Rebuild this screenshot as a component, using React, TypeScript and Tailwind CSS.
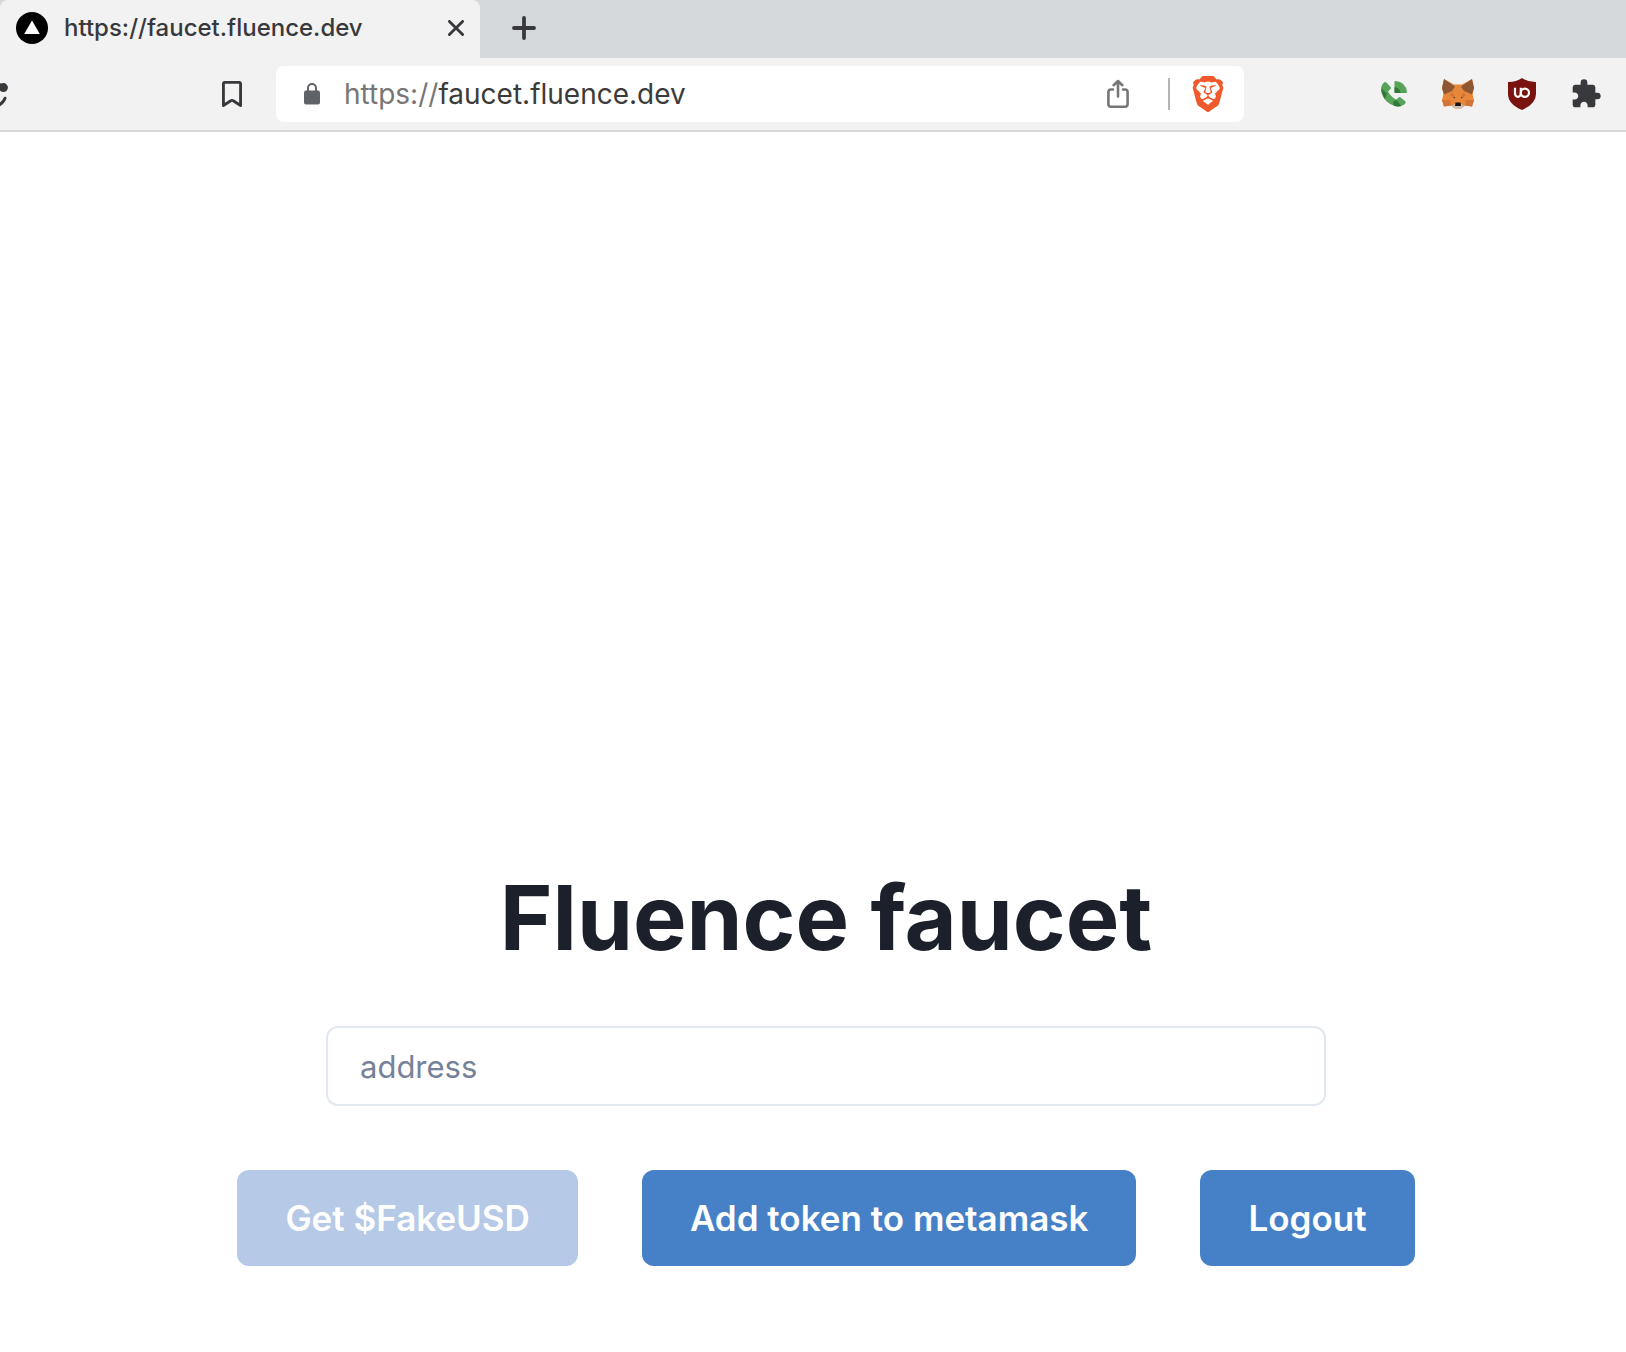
import { MdExtension } from "react-icons/md";
import { SiBrave } from "react-icons/si";

const iconButton = "flex items-center justify-center";

function Favicon() {
  return (
    <svg viewBox="0 0 32 32" className="size-8 shrink-0" aria-hidden="true">
      <circle cx="16" cy="16" r="16" fill="#000" />
      <path d="M16 8.5 23.8 22H8.2Z" fill="#fff" />
    </svg>
  );
}

function CloseIcon() {
  return (
    <svg viewBox="0 0 16 16" className="size-4" fill="none" stroke="#38393d" strokeWidth="2.8" strokeLinecap="round" aria-hidden="true">
      <path d="M1.4 1.4 14.6 14.6M14.6 1.4 1.4 14.6" />
    </svg>
  );
}

function PlusIcon() {
  return (
    <svg viewBox="0 0 24 24" className="size-6" fill="none" stroke="#38393d" strokeWidth="3.8" strokeLinecap="round" aria-hidden="true">
      <path d="M12 2V22M2 12H22" />
    </svg>
  );
}

function ReloadIcon() {
  return (
    <svg viewBox="0 0 8 28" className="h-7 w-2" aria-hidden="true">
      <circle cx="3.4" cy="7.6" r="4.5" fill="#38393d" />
      <path d="M-2 3.6 2 6" fill="none" stroke="#38393d" strokeWidth="3" />
      <path d="M5 18.2Q3.4 22.5-1 25" fill="none" stroke="#38393d" strokeWidth="3" strokeLinecap="round" />
    </svg>
  );
}

function BookmarkIcon() {
  return (
    <svg viewBox="0 0 20 26" className="h-[26px] w-5" fill="none" stroke="#38393d" strokeWidth="2.9" strokeLinejoin="round" aria-hidden="true">
      <path d="M3 1.4H17Q18.6 1.4 18.6 3V24.5L11.2 19.8Q10 19 8.8 19.8L1.4 24.5V3Q1.4 1.4 3 1.4Z" />
    </svg>
  );
}

function LockIcon() {
  return (
    <svg viewBox="0 0 16 22" className="h-[22px] w-4 shrink-0" aria-hidden="true">
      <rect y="7.5" width="16" height="14" rx="2" fill="#5f6368" />
      <path d="M4 9V5a4 4 0 0 1 8 0V9" fill="none" stroke="#5f6368" strokeWidth="2" />
    </svg>
  );
}

function ShareIcon() {
  return (
    <svg viewBox="0 0 22 30" className="h-[30px] w-[22px]" fill="none" stroke="#767676" strokeWidth="2.6" strokeLinejoin="round" strokeLinecap="round" aria-hidden="true">
      <path d="M6 10.5H4Q1.4 10.5 1.4 13V25Q1.4 27.8 4 27.8H18Q20.6 27.8 20.6 25V13Q20.6 10.5 18 10.5H16" />
      <path d="M11 17.5V2.5M6.6 6.2 11 2 15.4 6.2" />
    </svg>
  );
}

function PhoneIcon() {
  return (
    <svg viewBox="0 0 26 26" className="size-[26px]" aria-hidden="true">
      <path d="M3.4 1.2Q4.6.6 5.6 1.7L9.6 6.1Q10.4 7.1 9.5 8L7 10.6Q9.5 15.5 15.2 18.8L17.6 16.5Q18.6 15.7 19.6 16.5L24 20Q25.2 21.2 24.2 22.6Q21 26.2 14.6 25.2Q3.5 22.5.4 11.5Q-1 4.5 3.4 1.2Z" fill="#56a45a" />
      <path d="M.2 7.5 6 12.5 4 18.2Q.4 13 .2 7.5ZM12.2 20.8 15.2 18.8 20.5 25Q16.5 26 12.5 24.4Z" fill="#327a3a" />
      <path d="M13.5 1Q13.5 0 14.5 0Q24.8 1 26 11Q26 12 25 12H14.5Q13.5 12 13.5 11Z" fill="#56a45a" />
      <path d="M13.5 6Q18.7 6.8 19.7 12H14.5Q13.5 12 13.5 11Z" fill="#327a3a" />
    </svg>
  );
}

function FoxIcon() {
  return (
    <svg viewBox="0 0 32 30" className="h-[30px] w-8" aria-hidden="true">
      <path d="M2 0 12 5.5H20L30 0 32 9 30.5 15 32 21 30 27.5 23 26.5 19 29.5H13L9 26.5 2 27.5 0 21 1.5 15 0 9Z" fill="#e8863a" />
      <path d="M2 0 13 7.5 10 12 2 15.5 0 9ZM30 0 19 7.5 22 12 30 15.5 32 9Z" fill="#8d5732" />
      <path d="M0 21H8L9 26.5 2 27.5ZM32 21H24L23 26.5 30 27.5ZM10 13.5 13 17.5 8 17ZM22 13.5 19 17.5 24 17Z" fill="#d2733a" />
      <path d="M10.4 17.6 13 18.2 12.8 19.6ZM21.6 17.6 19 18.2 19.2 19.6Z" fill="#393432" />
      <path d="M10 26.5 13 25H19L22 26.5 19 29.5H13Z" fill="#cdbfb3" />
      <path d="M13.5 23.6H18.5L19 27H13Z" fill="#161616" />
    </svg>
  );
}

function ShieldIcon() {
  return (
    <svg viewBox="0 0 28 32" className="h-8 w-7" aria-hidden="true">
      <path d="M14 0Q20 4.2 28 4V16Q28 26 14 32Q0 26 0 16V4Q8 4.2 14 0Z" fill="#7a130f" />
      <g fill="none" stroke="#fff" strokeWidth="2.2">
        <path d="M7 9.8V15.2A2.9 3.6 0 0 0 12.8 15.2V9.8" />
        <circle cx="16.9" cy="14.8" r="4.1" />
      </g>
    </svg>
  );
}

const extensions = [
  { name: "Phone", icon: <PhoneIcon /> },
  { name: "MetaMask", icon: <FoxIcon /> },
  { name: "uBlock Origin", icon: <ShieldIcon /> },
  { name: "Extensions", icon: <MdExtension className="size-8 text-[#38393d]" aria-hidden="true" /> },
];

const actions = [
  { label: "Get $FakeUSD", disabled: true },
  { label: "Add token to metamask", disabled: false },
  { label: "Logout", disabled: false },
];

export default function App() {
  return (
    <div className="flex min-h-screen flex-col overflow-x-hidden bg-white font-['Inter','Liberation_Sans',sans-serif]">
      <header>
        <div className="flex h-[58px] bg-[#d5d9dc]">
          <div className="flex w-[480px] items-center rounded-t-lg bg-[#f2f2f2] px-4 pb-0.5">
            <Favicon />
            <span className="ml-4 flex-1 whitespace-nowrap text-[24px] font-medium leading-8 text-[#38393d]">
              https://faucet.fluence.dev
            </span>
            <button type="button" aria-label="Close tab" className={iconButton}>
              <CloseIcon />
            </button>
          </div>
          <button type="button" aria-label="New tab" className={`${iconButton} ml-8 pb-0.5`}>
            <PlusIcon />
          </button>
        </div>
        <div className="flex h-[74px] items-center border-b-2 border-[#d5d9dc] bg-[#f2f2f2]">
          <button type="button" aria-label="Reload" className={iconButton}>
            <ReloadIcon />
          </button>
          <button type="button" aria-label="Bookmark" className={`${iconButton} ml-[214px]`}>
            <BookmarkIcon />
          </button>
          <div className="ml-[34px] flex h-14 flex-1 items-center rounded-lg bg-white pl-7 pr-[18px]">
            <LockIcon />
            <span className="ml-6 flex-1 whitespace-nowrap text-[28px] leading-8 text-[#3b3b3b]">
              <span className="text-[#767676]">https://</span>faucet.fluence.dev
            </span>
            <button type="button" aria-label="Share" className={iconButton}>
              <ShareIcon />
            </button>
            <span className="ml-[39px] h-8 w-0.5 bg-[#b4b4b4]" />
            <button type="button" aria-label="Brave Shields" className={`${iconButton} ml-5`}>
              <SiBrave className="size-9 text-[#f0592b]" aria-hidden="true" />
            </button>
          </div>
          <div className="ml-[130px] mr-5 flex gap-6">
            {extensions.map((e) => (
              <button key={e.name} type="button" aria-label={e.name} className={`${iconButton} size-10`}>
                {e.icon}
              </button>
            ))}
          </div>
        </div>
      </header>
      <main className="flex flex-1 flex-col items-center justify-end pb-[86px] pl-[26px]">
        <h1 className="whitespace-nowrap text-[90px] font-bold leading-[96px] text-[#1b202b]">Fluence faucet</h1>
        <input
          type="text"
          aria-label="address"
          placeholder="address"
          className="mt-[60px] h-20 w-full max-w-[1000px] rounded-xl border-2 border-[#e2e8f0] px-8 text-[31px] text-[#1b202b] outline-none placeholder:text-[#758299]"
        />
        <div className="mt-16 flex gap-16">
          {actions.map((a) => (
            <button
              key={a.label}
              type="button"
              disabled={a.disabled}
              className="h-24 whitespace-nowrap rounded-xl bg-[#4681c8] px-12 text-[35px] font-semibold text-white disabled:bg-[#b6cae8]"
            >
              {a.label}
            </button>
          ))}
        </div>
      </main>
    </div>
  );
}
